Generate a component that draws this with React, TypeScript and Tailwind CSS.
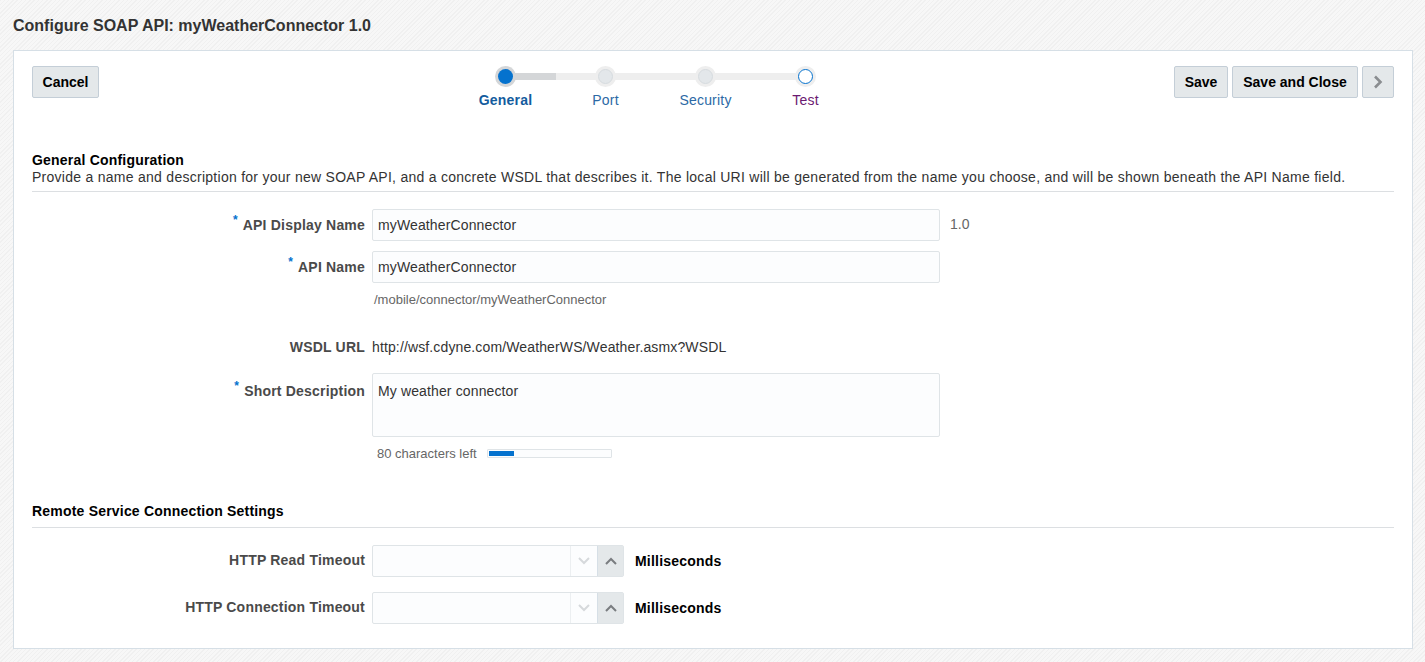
import React from 'react';

const steps = [
  { name: 'General', x: 0 },
  { name: 'Port', x: 100 },
  { name: 'Security', x: 200 },
  { name: 'Test', x: 300 },
];

const Label = ({ text, required }: { text: string; required?: boolean }) => (
  <div className="w-[340px] shrink-0 text-right text-[14px] font-bold text-[#4a4a4a] pr-[7px] tracking-[0.2px]">
    {required && <span className="text-[#0572ce] text-[12px] relative -top-[6px] mr-[5px]">*</span>}
    {text}
  </div>
);

const Spinner = () => (
  <div className="flex items-center">
    <div className="flex h-[32px] w-[252px] border border-[#dfe4e7] rounded-[2px] bg-[#fcfdfe]">
      <div className="flex-1" />
      <div className="w-[27px] border-l border-[#eceff1] flex items-center justify-center">
        <svg width="12" height="8" viewBox="0 0 12 8"><path d="M1 1l5 5 5-5" fill="none" stroke="#d6d9dc" strokeWidth="2" /></svg>
      </div>
      <div className="w-[26px] bg-[#e4e8ea] border-l border-[#d6dfe6] flex items-center justify-center">
        <svg width="12" height="8" viewBox="0 0 12 8"><path d="M1 7l5-5 5 5" fill="none" stroke="#7a7d80" strokeWidth="2" /></svg>
      </div>
    </div>
    <span className="ml-[11px] text-[14px] font-bold text-black mt-[2px] tracking-[0.2px]">Milliseconds</span>
  </div>
);

const Button = ({ children, className = '' }: { children: React.ReactNode; className?: string }) => (
  <button className={`h-[32px] border border-[#c4ced7] rounded-[2px] bg-[#e4e8ea] text-[14px] font-bold text-[#000] ${className}`}>
    {children}
  </button>
);

export default function App() {
  return (
    <div
      className="w-[1425px] h-[662px] overflow-hidden bg-[#f4f4f4] bg-[repeating-linear-gradient(135deg,#f0f0f0_0px,#f0f0f0_1px,#f7f7f7_1px,#f7f7f7_3px)] text-[#333] pt-[15px]"
      style={{ fontFamily: '"Liberation Sans", Arial, sans-serif' }}
    >
      <h1 className="pl-[13px] text-[16px] font-bold text-[#333] h-[35px] leading-[22px]">Configure SOAP API: myWeatherConnector 1.0</h1>
      <div className="ml-[13px] w-[1400px] h-[599px] bg-white border border-[#d6dfe6] px-[18px] pt-[15px]">
        {/* Top bar */}
        <div className="flex items-start justify-between h-[86px]">
          <Button className="w-[67px]">Cancel</Button>
          <div className="relative w-[360px] h-[60px] ml-[38px]">
            <div className="absolute left-[30px] top-[7px] w-[300px] h-[7px] bg-[#eeeeee]" />
            <div className="absolute left-[30px] top-[7px] w-[50px] h-[7px] bg-[#d4d6d8]" />
            {steps.map((s, i) => (
              <div key={s.name} className="absolute top-0 w-[100px] flex flex-col items-center" style={{ left: s.x - 20 }}>
                <div className={`w-[21px] h-[21px] rounded-full flex items-center justify-center ${i === 0 ? 'bg-[#d4d6d8]' : 'bg-[#eeeeee]'}`}>
                  {i === 0 && <div className="w-[15px] h-[15px] rounded-full bg-[#0572ce]" />}
                  {(i === 1 || i === 2) && <div className="w-[15px] h-[15px] rounded-full bg-[#e3e7ea] border border-[#d6dbdf]" />}
                  {i === 3 && <div className="w-[15px] h-[15px] rounded-full bg-white border-[1.5px] border-[#0572ce]" />}
                </div>
                <div
                  className={`mt-[3px] text-[14px] tracking-[0.2px] ${
                    i === 0 ? 'font-bold text-[#145c9e]' : i === 3 ? 'text-[#6b1a72]' : 'text-[#2c69a5]'
                  }`}
                >
                  {s.name}
                </div>
              </div>
            ))}
          </div>
          <div className="flex gap-[4px]">
            <Button className="w-[54px]">Save</Button>
            <Button className="w-[126px]">Save and Close</Button>
            <Button className="w-[32px] flex items-center justify-center">
              <svg width="10" height="14" viewBox="0 0 10 14"><path d="M2 1.5l5.5 5.5-5.5 5.5" fill="none" stroke="#8a8d90" strokeWidth="2.6" /></svg>
            </Button>
          </div>
        </div>

        {/* General configuration */}
        <div className="border-b border-[#dcdfe2] pb-[6px]">
          <h2 className="text-[14px] font-bold text-black leading-[17px] tracking-[0.2px]">General Configuration</h2>
          <p className="text-[14px] text-[#333] leading-[16px] tracking-[0.27px]">
            Provide a name and description for your new SOAP API, and a concrete WSDL that describes it. The local URI will be generated from the name you choose, and will be shown beneath the API Name field.
          </p>
        </div>

        <div className="mt-[17px] flex flex-col">
          <div className="flex items-center h-[32px]">
            <Label text="API Display Name" required />
            <div className="w-[568px] h-[32px] border border-[#dfe4e7] rounded-[2px] bg-[#fcfdfe] px-[5px] flex items-center text-[14px] text-[#333] tracking-[0.13px]">myWeatherConnector</div>
            <span className="ml-[10px] text-[14px] text-[#666] -mt-[2px]">1.0</span>
          </div>
          <div className="flex items-center h-[32px] mt-[10px]">
            <Label text="API Name" required />
            <div className="w-[568px] h-[32px] border border-[#dfe4e7] rounded-[2px] bg-[#fcfdfe] px-[5px] flex items-center text-[14px] text-[#333] tracking-[0.13px]">myWeatherConnector</div>
          </div>
          <div className="pl-[342px] mt-[9px] text-[13px] text-[#666] leading-[16px]">/mobile/connector/myWeatherConnector</div>

          <div className="flex items-center mt-[30px] h-[18px]">
            <Label text="WSDL URL" />
            <span className="text-[14px] text-[#333] tracking-[0.13px]">http://wsf.cdyne.com/WeatherWS/Weather.asmx?WSDL</span>
          </div>

          <div className="flex items-start mt-[17px]">
            <div className="pt-[8px]"><Label text="Short Description" required /></div>
            <div className="w-[568px] h-[64px] border border-[#dfe4e7] rounded-[2px] bg-[#fcfdfe] px-[5px] pt-[7px] text-[14px] text-[#333] tracking-[0.13px]">My weather connector</div>
          </div>
          <div className="pl-[345px] mt-[7px] flex items-center">
            <span className="text-[13px] text-[#666]">80 characters left</span>
            <div className="ml-[10px] w-[125px] h-[9px] border border-[#dfe4e7] rounded-[1px] bg-[#fcfdfe] p-[1px]">
              <div className="w-[25px] h-full bg-[#0572ce]" />
            </div>
          </div>
        </div>

        {/* Remote section */}
        <div className="mt-[39px] border-b border-[#dcdfe2] pb-[7px]">
          <h2 className="text-[14px] font-bold text-black leading-[17px] tracking-[0.2px]">Remote Service Connection Settings</h2>
        </div>
        <div className="mt-[17px] flex flex-col gap-[15px]">
          <div className="flex items-center">
            <Label text="HTTP Read Timeout" />
            <Spinner />
          </div>
          <div className="flex items-center">
            <Label text="HTTP Connection Timeout" />
            <Spinner />
          </div>
        </div>
      </div>
    </div>
  );
}
